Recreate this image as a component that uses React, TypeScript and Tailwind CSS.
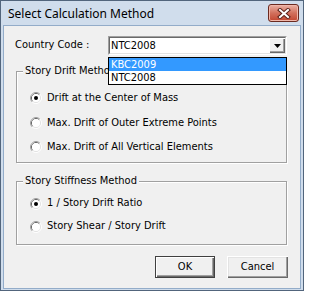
import React from "react";

function Radio({ checked }: { checked?: boolean }) {
  return (
    <svg width="12" height="12" viewBox="0 0 12 12" className="shrink-0">
      <path d="M2.11 9.89A5.5 5.5 0 0 1 9.89 2.11" fill="none" stroke="#a0a0a0" />
      <path d="M9.89 2.11A5.5 5.5 0 0 1 2.11 9.89" fill="none" stroke="#ffffff" />
      <path d="M2.82 9.18A4.5 4.5 0 0 1 9.18 2.82" fill="none" stroke="#696969" />
      <path d="M9.18 2.82A4.5 4.5 0 0 1 2.82 9.18" fill="none" stroke="#e3e3e3" />
      <circle cx="6" cy="6" r="4" fill="#fff" />
      {checked && <circle cx="6" cy="6" r="2" fill="#000" />}
    </svg>
  );
}

function Option({ label, checked, tall }: { label: string; checked?: boolean; tall?: boolean }) {
  return (
    <div className={tall ? "flex h-[24.5px] items-center gap-[5px]" : "flex h-[23px] items-center gap-[5px]"}>
      <Radio checked={checked} />
      <span>{label}</span>
    </div>
  );
}

function Group({
  title,
  className,
  children,
}: {
  title: string;
  className: string;
  children: React.ReactNode;
}) {
  return (
    <div
      className={
        "relative ml-[12px] w-[271px] border border-[#a0a0a0] pl-[13px] shadow-[inset_1px_1px_0_#fff,1px_1px_0_#fff] " +
        className
      }
    >
      <span className="absolute -top-[8px] left-[6px] bg-[#f0f0f0] px-[2px] leading-[14px]">{title}</span>
      {children}
    </div>
  );
}

function DialogButton({ label, primary }: { label: string; primary?: boolean }) {
  return (
    <button
      className={
        primary
          ? "h-[22px] w-[60px] border border-[#404040] bg-[#f0f0f0] shadow-[inset_1px_1px_0_#fff,inset_-1px_-1px_0_#696969,inset_-2px_-2px_0_#a0a0a0]"
          : "h-[22px] w-[61px] bg-[#f0f0f0] shadow-[inset_1px_1px_0_#fff,inset_-1px_-1px_0_#696969,inset_-2px_-2px_0_#a0a0a0,inset_2px_2px_0_#e3e3e3]"
      }
    >
      {label}
    </button>
  );
}

export default function App() {
  return (
    <div className="flex h-[291px] w-[304px] flex-col border border-[#52657c] bg-[#d0ddec] font-['DejaVu_Sans_Condensed','Liberation_Sans',sans-serif] text-[11px] text-black">
      {/* Title bar */}
      <div className="flex h-[25px] items-start justify-between">
        <span className="pl-[7px] pt-[5px] font-['Noto_Sans',sans-serif] text-[12px] leading-[16px] text-black">
          Select Calculation Method
        </span>
        <div className="mr-[4px] mt-[3px] flex h-[18px] w-[31px] items-center justify-center rounded-[3px] border border-[#6b2a20] bg-gradient-to-b from-[#eab1a4] via-[#d2705d] to-[#c3452f] shadow-[inset_0_0_0_1px_#f0b7aa]">
          <svg width="14" height="11" viewBox="0 0 14 11">
            <path d="M3 2L11 9M11 2L3 9" stroke="#5a2119" strokeWidth="4" strokeLinecap="square" />
            <path d="M3 2L11 9M11 2L3 9" stroke="#ffffff" strokeWidth="2" strokeLinecap="square" />
          </svg>
        </div>
      </div>

      {/* Client area */}
      <div className="relative mx-[3px] mb-[2px] flex flex-1 flex-col bg-[#f0f0f0] pt-[10px] ring-1 ring-[#93acc9]">
        <div className="flex h-[19px] items-center pl-[11px]">
          <span className="w-[93px]">Country Code :</span>
          <div className="flex h-[19px] w-[179px] border border-b-white border-l-[#a0a0a0] border-r-white border-t-[#a0a0a0]">
            <div className="flex flex-1 border border-b-[#e3e3e3] border-l-[#696969] border-r-[#e3e3e3] border-t-[#696969] bg-white">
              <span className="flex-1 pl-[1px] leading-[15px]">NTC2008</span>
              <div className="flex w-[16px] items-center justify-center bg-[#f0f0f0] shadow-[inset_1px_1px_0_#fff,inset_-1px_-1px_0_#696969,inset_-2px_-2px_0_#a0a0a0]">
                <svg width="7" height="4" viewBox="0 0 7 4">
                  <path d="M0 0H7L3.5 4Z" fill="#000" />
                </svg>
              </div>
            </div>
          </div>
        </div>

        <Group title="Story Drift Method" className="mt-[16px] h-[92px] pt-[14px]">
          <Option label="Drift at the Center of Mass" checked tall />
          <Option label="Max. Drift of Outer Extreme Points" tall />
          <Option label="Max. Drift of All Vertical Elements" tall />
        </Group>

        <Group title="Story Stiffness Method" className="mt-[18px] h-[64px] pt-[10px]">
          <Option label="1 / Story Drift Ratio" checked />
          <Option label="Story Shear / Story Drift" />
        </Group>

        <div className="mt-[11px] flex justify-end gap-[12px] pr-[12px]">
          <DialogButton label="OK" primary />
          <DialogButton label="Cancel" />
        </div>

        {/* Open dropdown list */}
        <div className="absolute left-[104px] top-[31px] w-[179px] border border-black bg-white">
          <div className="h-[13px] bg-[#3399ff] pl-[2px] leading-[13px] text-white">KBC2009</div>
          <div className="h-[13px] pl-[2px] leading-[13px]">NTC2008</div>
        </div>
      </div>
    </div>
  );
}
